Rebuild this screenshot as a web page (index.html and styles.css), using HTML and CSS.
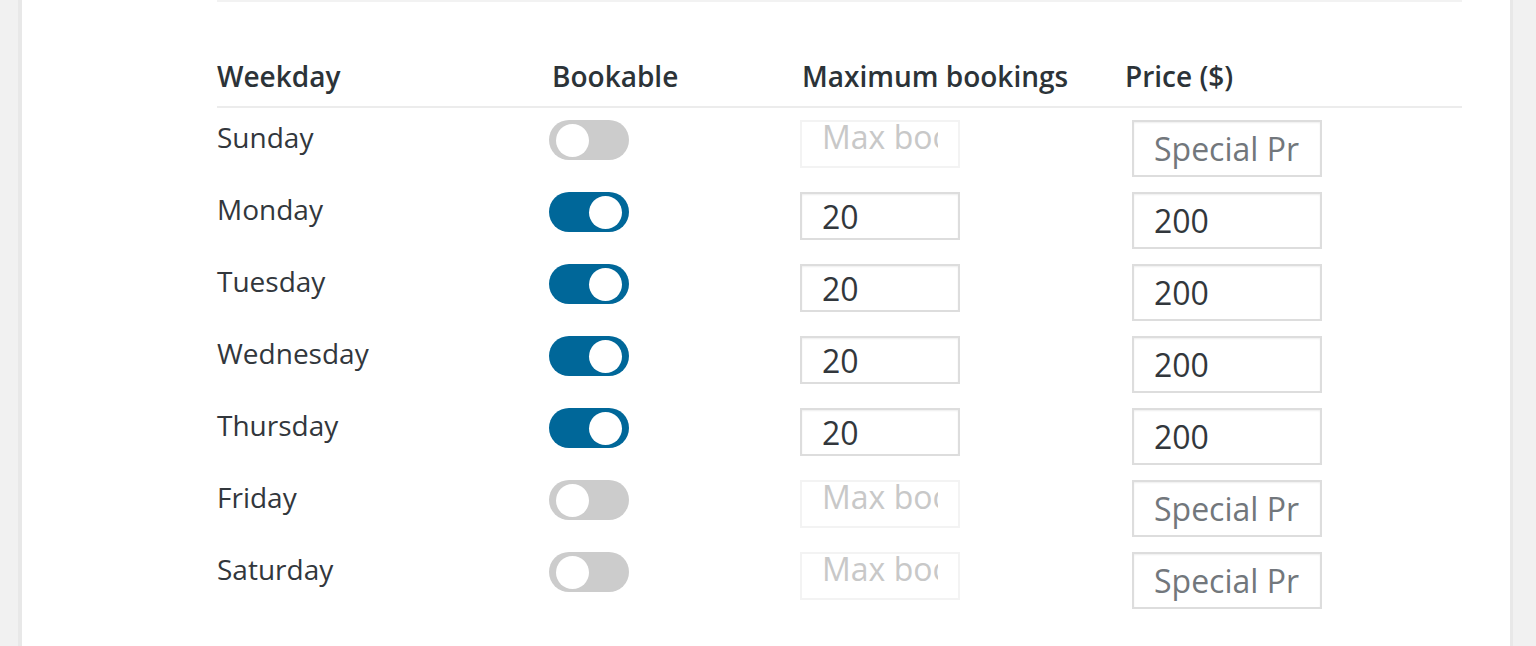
FILE: index.html
```html
<!DOCTYPE html>
<html lang="en">
<head>
<meta charset="utf-8">
<title>Weekday bookings</title>
<link rel="stylesheet" href="styles.css">
</head>
<body>
<div class="page">
  <div class="card">
    <div class="inner">
      <div class="top-rule"></div>
      <div class="grid head">
        <div class="th th-day">Weekday</div>
        <div class="th th-book">Bookable</div>
        <div class="th th-max">Maximum bookings</div>
        <div class="th th-price">Price ($)</div>
      </div>

      <div class="grid row">
        <div class="day">Sunday</div>
        <div><span class="toggle"><span class="knob"></span></span></div>
        <div><input class="field max off" type="text" placeholder="Max bookings" disabled></div>
        <div><input class="field price" type="text" placeholder="Special Price"></div>
      </div>
      <div class="grid row">
        <div class="day">Monday</div>
        <div><span class="toggle on"><span class="knob"></span></span></div>
        <div><input class="field max" type="text" value="20"></div>
        <div><input class="field price" type="text" value="200"></div>
      </div>
      <div class="grid row">
        <div class="day">Tuesday</div>
        <div><span class="toggle on"><span class="knob"></span></span></div>
        <div><input class="field max" type="text" value="20"></div>
        <div><input class="field price" type="text" value="200"></div>
      </div>
      <div class="grid row">
        <div class="day">Wednesday</div>
        <div><span class="toggle on"><span class="knob"></span></span></div>
        <div><input class="field max" type="text" value="20"></div>
        <div><input class="field price" type="text" value="200"></div>
      </div>
      <div class="grid row">
        <div class="day">Thursday</div>
        <div><span class="toggle on"><span class="knob"></span></span></div>
        <div><input class="field max" type="text" value="20"></div>
        <div><input class="field price" type="text" value="200"></div>
      </div>
      <div class="grid row">
        <div class="day">Friday</div>
        <div><span class="toggle"><span class="knob"></span></span></div>
        <div><input class="field max off" type="text" placeholder="Max bookings" disabled></div>
        <div><input class="field price" type="text" placeholder="Special Price"></div>
      </div>
      <div class="grid row">
        <div class="day">Saturday</div>
        <div><span class="toggle"><span class="knob"></span></span></div>
        <div><input class="field max off" type="text" placeholder="Max bookings" disabled></div>
        <div><input class="field price" type="text" placeholder="Special Price"></div>
      </div>
    </div>
  </div>
</div>
</body>
</html>
```

FILE: styles.css
```css
html, body {
  margin: 0;
  padding: 0;
  height: 646px;
  overflow: hidden;
  background: #f1f1f1;
  font-family: "Open Sans", "Noto Sans", sans-serif;
  color: #32373c;
}

.page {
  padding-left: 18px;
  height: 646px;
}

.card {
  width: 1488px;
  height: 646px;
  background: #fff;
  border-left: 4px solid #e8e8e8;
  border-right: 3px solid #e8e8e8;
}

.inner {
  padding: 0 48px 0 195px;
}

.top-rule {
  height: 2px;
  background: #f2f2f2;
}

.grid {
  display: grid;
  grid-template-columns: 332px 251px 326px 1fr;
}

.head {
  padding: 56px 0 12px;
  border-bottom: 2px solid #ececec;
}

.th {
  font-size: 28px;
  font-weight: 600;
  line-height: 36px;
  color: #2c3338;
}

.th-book { padding-left: 3px; }
.th-max { padding-left: 2px; }
.th-price { margin-left: -1px; }

.row {
  height: 72px;
  box-sizing: border-box;
  padding-top: 12px;
  align-items: start;
}

.day {
  font-size: 28px;
  line-height: 32px;
  padding-top: 1px;
  color: #32373c;
}

.toggle {
  display: flex;
  align-items: center;
  width: 80px;
  height: 40px;
  border-radius: 20px;
  background: #cccccc;
  box-sizing: border-box;
  padding: 0 7px;
}

.toggle.on {
  background: #006799;
  justify-content: flex-end;
}

.knob {
  width: 33px;
  height: 33px;
  border-radius: 50%;
  background: #fff;
}

.field {
  display: block;
  box-sizing: border-box;
  margin: 0;
  border: 2px solid #dddddd;
  box-shadow: inset 0 1px 2px rgba(0, 0, 0, 0.07);
  background: #fff;
  font-family: "Open Sans", "Noto Sans", sans-serif;
  font-size: 32px;
  color: #32373c;
  padding: 0 20px;
  outline: none;
}

.field.max {
  width: 160px;
  height: 48px;
}

.field.price {
  width: 190px;
  height: 57px;
  margin-left: 6px;
}

.field.price::placeholder {
  color: #72777c;
  opacity: 1;
}

.field.off {
  border-color: #f3f3f3;
  box-shadow: none;
  background: #fff;
  padding-bottom: 16px;
}

.field.off::placeholder {
  color: #c8c8c8;
  opacity: 1;
}
```
